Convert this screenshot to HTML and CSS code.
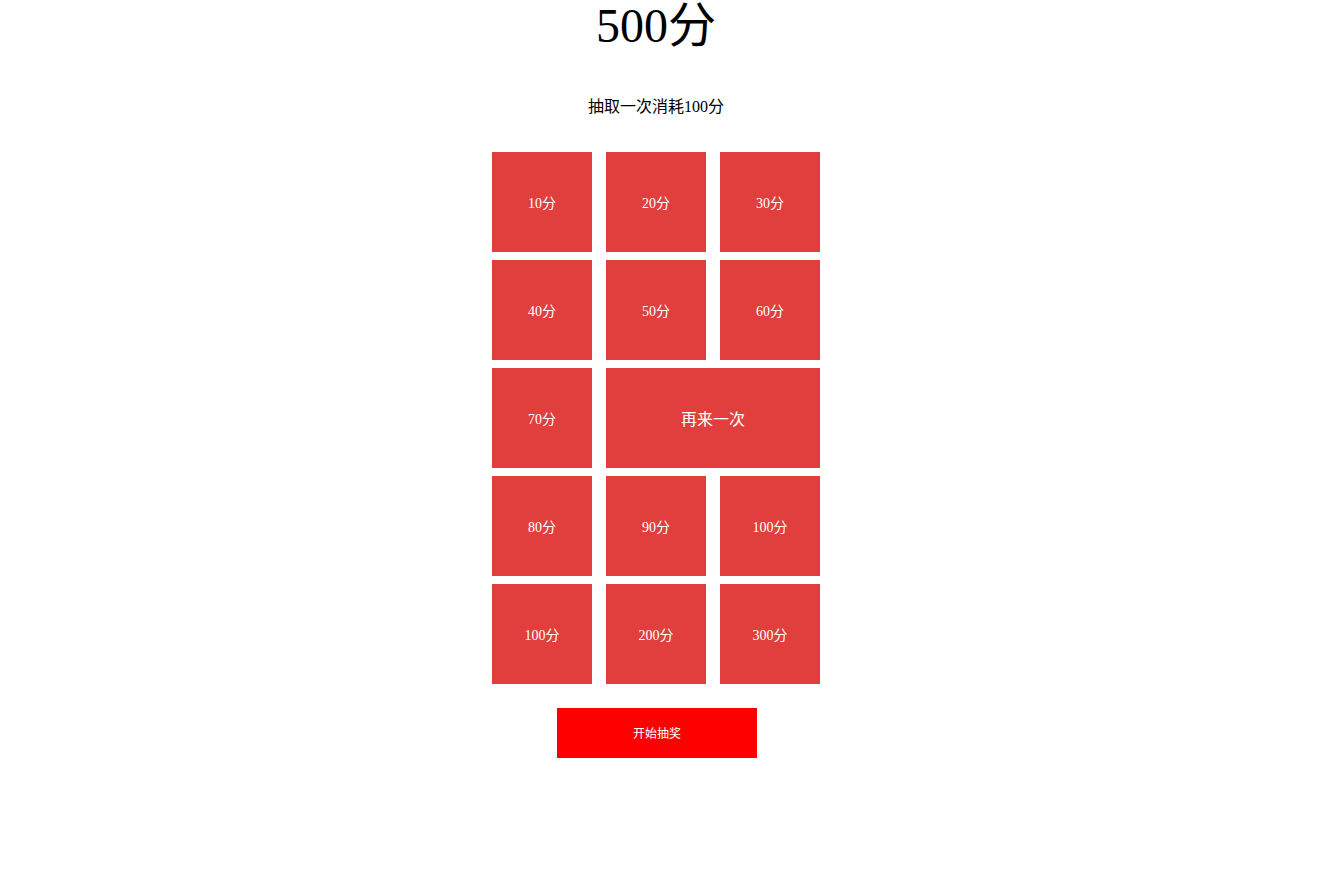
FILE: index.html
```html
<!DOCTYPE html>
<html lang="zh">
<head>
<meta charset="utf-8">
<title>抽奖</title>
<link rel="stylesheet" href="styles.css">
</head>
<body>
<div class="page">
  <h1 class="score">500分</h1>
  <p class="cost">抽取一次消耗100分</p>
  <div class="grid">
    <div class="tile">10分</div>
    <div class="tile">20分</div>
    <div class="tile">30分</div>
    <div class="tile">40分</div>
    <div class="tile">50分</div>
    <div class="tile">60分</div>
    <div class="tile">70分</div>
    <div class="tile tile-wide">再来一次</div>
    <div class="tile">80分</div>
    <div class="tile">90分</div>
    <div class="tile">100分</div>
    <div class="tile">100分</div>
    <div class="tile">200分</div>
    <div class="tile">300分</div>
  </div>
  <button class="start">开始抽奖</button>
</div>
</body>
</html>
```

FILE: styles.css
```css
html, body {
  background: #ffffff;
}
body {
  margin: 0 11px 0 0;
  font-family: "Liberation Serif", "Noto Sans CJK SC", serif;
  color: #000;
}
.page {
  display: flex;
  flex-direction: column;
  align-items: center;
}
.score {
  margin: 0;
  padding-top: 1px;
  font-size: 48px;
  font-weight: normal;
  line-height: 50px;
  height: 50px;
}
.cost {
  margin: 46px 0 0;
  font-size: 16px;
  line-height: 20px;
  height: 20px;
}
.grid {
  margin-top: 35px;
  display: grid;
  grid-template-columns: repeat(3, 100px);
  grid-auto-rows: 100px;
  column-gap: 14px;
  row-gap: 8px;
}
.tile {
  background: #e03f3d;
  color: #fff;
  font-size: 14px;
  display: flex;
  align-items: center;
  justify-content: center;
}
.tile-wide {
  grid-column: span 2;
  font-size: 16px;
}
.start {
  margin-top: 24px;
  margin-left: 2px;
  width: 200px;
  height: 50px;
  border: none;
  background: #ff0000;
  color: #fff;
  font-family: "Liberation Serif", "Noto Sans CJK SC", serif;
  font-size: 12px;
  padding: 0;
}
```
